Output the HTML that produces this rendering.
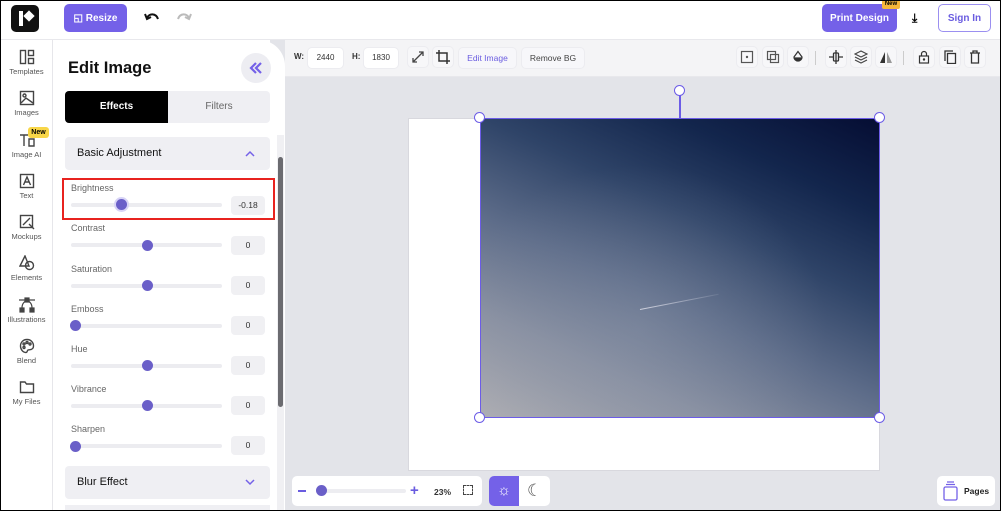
<!DOCTYPE html>
<html><head><meta charset="utf-8"><style>
*{box-sizing:border-box;margin:0;padding:0}
body{width:1001px;height:511px;overflow:hidden;font-family:"Liberation Sans",sans-serif;background:#fff;position:relative}
.a{position:absolute}
.fc{display:flex;align-items:center;justify-content:center}
.frame{left:0;top:0;width:1001px;height:511px;border:1px solid #000;z-index:50;pointer-events:none}
.rail{left:0;top:40px;width:53px;height:471px;background:#fff;border-right:1px solid #e6e6ea}
.ri{position:absolute;left:0;width:53px;text-align:center;font-size:7.5px;color:#555}
.ri svg{display:block;margin:0 auto 2px}
.lbl{position:absolute;left:71px;font-size:9px;color:#666}
.trk{position:absolute;left:71px;width:151px;height:4px;border-radius:2px;background:#ececf0}
.th{position:absolute;width:11px;height:11px;border-radius:50%;background:#6a5fc8}
.val{position:absolute;left:231px;width:34px;height:19px;border-radius:4px;background:#f0f0f3;font-size:8.5px;color:#333;text-align:center;line-height:19px}
.tb{position:absolute;top:48px;height:20px;border-radius:4px;background:#fff;box-shadow:0 0 0 1px #ececf0}
.ib{position:absolute;top:47px;width:20px;height:20px;border-radius:4px;background:#f7f7f9;box-shadow:0 0 0 1px #ececf0}
.ib svg{position:absolute;left:3px;top:3px}
.hd{position:absolute;width:11px;height:11px;border-radius:50%;background:#fff;border:1.5px solid #6c5ce7}
</style></head><body>
<div class="a frame"></div>
<div class="a" style="left:0;top:0;width:1001px;height:40px;background:#fff;border-bottom:1px solid #e8e8ec"></div>
<div class="a" style="left:11px;top:5px;width:28px;height:27px;border-radius:5px;background:#111"></div>
<div class="a" style="left:19px;top:11px;width:4px;height:15px;background:#fff"></div>
<div class="a" style="left:25px;top:12px;width:8px;height:8px;background:#fff;transform:rotate(45deg)"></div>
<div class="a fc" style="left:64px;top:4px;width:63px;height:28px;border-radius:5px;background:#7461e8;color:#fff;font-size:10px;font-weight:bold">◱&nbsp;Resize</div>
<svg class="a" style="left:144px;top:11px" width="16" height="14" viewBox="0 0 16 14"><path d="M3 7 C5 2 12 2 14 8" fill="none" stroke="#111" stroke-width="2"/><path d="M1 3 L3 8 L7 6" fill="none" stroke="#111" stroke-width="2"/></svg>
<svg class="a" style="left:176px;top:11px" width="16" height="14" viewBox="0 0 16 14"><path d="M13 7 C11 2 4 2 2 8" fill="none" stroke="#bbb" stroke-width="2"/><path d="M15 3 L13 8 L9 6" fill="none" stroke="#bbb" stroke-width="2"/></svg>
<div class="a fc" style="left:822px;top:4px;width:75px;height:28px;border-radius:5px;background:#7461e8;color:#fff;font-size:10px;font-weight:bold">Print Design</div>
<div class="a" style="left:882px;top:0;width:18px;height:9px;background:#f5b73a;font-size:6px;font-weight:bold;text-align:center;line-height:9px;border-radius:2px">New</div>
<div class="a" style="left:912px;top:11px;font-size:12px;font-weight:bold">⤓</div>
<div class="a fc" style="left:938px;top:4px;width:53px;height:28px;border-radius:5px;border:1.5px solid #9b8ff0;color:#6a5ce0;font-size:10px;font-weight:bold">Sign In</div>
<div class="a rail"></div>
<div class="ri" style="top:49px"><svg width="16" height="16" viewBox="0 0 16 16" fill="none" stroke="#444" stroke-width="1.4"><rect x="1.5" y="1.5" width="5" height="13"/><rect x="9.5" y="1.5" width="5" height="5"/><rect x="9.5" y="9.5" width="5" height="5"/></svg>Templates</div>
<div class="ri" style="top:90px"><svg width="16" height="16" viewBox="0 0 16 16" fill="none" stroke="#444" stroke-width="1.4"><rect x="1.5" y="1.5" width="13" height="13"/><circle cx="5.5" cy="5.5" r="1.5"/><path d="M2 13 L7 8 L14 13"/></svg>Images</div>
<div class="ri" style="top:132px"><svg width="16" height="16" viewBox="0 0 16 16" fill="none" stroke="#444" stroke-width="1.4"><path d="M1 3H9M5 3V14M10 7H15V14H10Z"/></svg>Image AI</div>
<div class="a" style="left:28px;top:127px;width:21px;height:11px;border-radius:3px;background:#f8d648;font-size:7px;font-weight:bold;text-align:center;line-height:11px">New</div>
<div class="ri" style="top:173px"><svg width="16" height="16" viewBox="0 0 16 16" fill="none" stroke="#444" stroke-width="1.4"><rect x="1.5" y="1.5" width="13" height="13"/><path d="M4.5 12L8 4L11.5 12M6 9H10"/></svg>Text</div>
<div class="ri" style="top:214px"><svg width="16" height="16" viewBox="0 0 16 16" fill="none" stroke="#444" stroke-width="1.4"><rect x="1.5" y="1.5" width="12" height="12"/><path d="M4 11L11 4M10 10L15 15"/></svg>Mockups</div>
<div class="ri" style="top:255px"><svg width="16" height="16" viewBox="0 0 16 16" fill="none" stroke="#444" stroke-width="1.4"><path d="M6 1L1 11H10Z"/><circle cx="10.5" cy="10.5" r="4"/></svg>Elements</div>
<div class="ri" style="top:297px"><svg width="16" height="16" viewBox="0 0 16 16" fill="#444" stroke="#444" stroke-width="1.2"><rect x="6" y="1" width="4" height="4"/><rect x="1" y="11" width="4" height="4"/><rect x="11" y="11" width="4" height="4"/><path d="M0 3H16M3 11C3 6 6 4 8 4C10 4 13 6 13 11" fill="none"/></svg>Illustrations</div>
<div class="ri" style="top:338px"><svg width="16" height="16" viewBox="0 0 16 16" fill="none" stroke="#444" stroke-width="1.4"><path d="M8 1.5C4 1.5 1.5 4.5 1.5 8C1.5 11.5 4 14.5 7 14.5C8.5 14.5 8 12.5 9 12C10 11.5 14.5 12.5 14.5 8C14.5 4.5 12 1.5 8 1.5Z"/><circle cx="5" cy="6" r="1"/><circle cx="8" cy="4.5" r="1"/><circle cx="11" cy="6" r="1"/><circle cx="5" cy="9.5" r="1"/></svg>Blend</div>
<div class="ri" style="top:379px"><svg width="16" height="16" viewBox="0 0 16 16" fill="none" stroke="#444" stroke-width="1.4"><path d="M1.5 3H6L7.5 5H14.5V13.5H1.5Z"/></svg>My Files</div>
<div class="a" style="left:270px;top:40px;width:731px;height:471px;background:#e3e4e9"></div>
<div class="a" style="left:285px;top:40px;width:716px;height:37px;background:#f4f4f6;border-bottom:1px solid #e8e8ec"></div>
<div class="a" style="left:54px;top:40px;width:231px;height:471px;background:#fff;border-top-right-radius:26px"></div>
<div class="a" style="left:68px;top:59px;font-size:16.5px;font-weight:bold;color:#111">Edit Image</div>
<div class="a" style="left:241px;top:53px;width:30px;height:30px;border-radius:50%;background:#ededf2"></div>
<svg class="a" style="left:249px;top:61px" width="14" height="14" viewBox="0 0 14 14" fill="none" stroke="#7461e8" stroke-width="2.2"><path d="M7 2L2 7L7 12M12 2L7 7L12 12"/></svg>
<div class="a" style="left:65px;top:91px;width:205px;height:32px;border-radius:4px;background:#efeff3"></div>
<div class="a" style="left:65px;top:91px;width:103px;height:32px;border-radius:4px 0 0 4px;background:#000;color:#fff;font-size:10px;font-weight:bold;text-align:center;line-height:32px">Effects</div>
<div class="a" style="left:168px;top:91px;width:102px;height:32px;color:#666;font-size:10px;text-align:center;line-height:32px">Filters</div>
<div class="a" style="left:65px;top:137px;width:205px;height:33px;border-radius:4px;background:#efeff3;font-size:11px;color:#111;line-height:33px;padding-left:12px">Basic Adjustment</div>
<svg class="a" style="left:245px;top:150px" width="10" height="7" viewBox="0 0 10 7" fill="none" stroke="#7461e8" stroke-width="1.5"><path d="M1 6L5 2L9 6"/></svg>
<div class="a" style="left:277px;top:135px;width:7px;height:376px;background:#f0f0f3"></div>
<div class="a" style="left:278px;top:157px;width:5px;height:250px;border-radius:3px;background:#6b6b70"></div>
<div class="a" style="left:62px;top:178px;width:213px;height:42px;border:2px solid #e8231f"></div>
<div class="lbl" style="top:183px">Brightness</div><div class="trk" style="top:203px"></div><div class="th" style="left:116px;top:199px;box-shadow:0 0 0 2px #d8d4f6"></div><div class="val" style="top:196px">-0.18</div>
<div class="lbl" style="top:223px">Contrast</div><div class="trk" style="top:243px"></div><div class="th" style="left:142px;top:240px"></div><div class="val" style="top:236px">0</div>
<div class="lbl" style="top:264px">Saturation</div><div class="trk" style="top:284px"></div><div class="th" style="left:142px;top:280px"></div><div class="val" style="top:276px">0</div>
<div class="lbl" style="top:304px">Emboss</div><div class="trk" style="top:324px"></div><div class="th" style="left:70px;top:320px"></div><div class="val" style="top:316px">0</div>
<div class="lbl" style="top:344px">Hue</div><div class="trk" style="top:364px"></div><div class="th" style="left:142px;top:360px"></div><div class="val" style="top:356px">0</div>
<div class="lbl" style="top:384px">Vibrance</div><div class="trk" style="top:404px"></div><div class="th" style="left:142px;top:400px"></div><div class="val" style="top:396px">0</div>
<div class="lbl" style="top:424px">Sharpen</div><div class="trk" style="top:444px"></div><div class="th" style="left:70px;top:441px"></div><div class="val" style="top:436px">0</div>
<div class="a" style="left:65px;top:466px;width:205px;height:33px;border-radius:4px;background:#efeff3;font-size:11px;color:#111;line-height:33px;padding-left:12px">Blur Effect</div>
<svg class="a" style="left:245px;top:479px" width="10" height="7" viewBox="0 0 10 7" fill="none" stroke="#7461e8" stroke-width="1.5"><path d="M1 1L5 5L9 1"/></svg>
<div class="a" style="left:65px;top:505px;width:205px;height:6px;background:#efeff3"></div>
<div class="a" style="left:294px;top:52px;font-size:8px;font-weight:bold;color:#333">W:</div>
<div class="tb" style="left:308px;width:35px;font-size:8px;text-align:center;line-height:20px;color:#333">2440</div>
<div class="a" style="left:352px;top:52px;font-size:8px;font-weight:bold;color:#333">H:</div>
<div class="tb" style="left:364px;width:34px;font-size:8px;text-align:center;line-height:20px;color:#333">1830</div>
<div class="ib" style="left:408px"><svg width="14" height="14" viewBox="0 0 14 14" fill="none" stroke="#444" stroke-width="1.3"><path d="M2 12L12 2M8 2H12V6M2 8V12H6"/></svg></div>
<div class="ib" style="left:433px"><svg width="14" height="14" viewBox="0 0 14 14" fill="none" stroke="#333" stroke-width="1.5"><path d="M3 0V11H14M0 3H11V14"/></svg></div>
<div class="tb" style="left:459px;width:57px;font-size:8.5px;color:#6a5ce0;text-align:center;line-height:20px;background:#f7f7fa">Edit Image</div>
<div class="tb" style="left:522px;width:62px;font-size:8.5px;color:#444;text-align:center;line-height:20px;background:#f7f7fa">Remove BG</div>
<div class="ib" style="left:737px"><svg width="14" height="14" viewBox="0 0 14 14" fill="none" stroke="#555" stroke-width="1.2"><rect x="1.5" y="1.5" width="11" height="11"/><circle cx="7" cy="7" r=".6" fill="#555"/></svg></div>
<div class="ib" style="left:763px"><svg width="14" height="14" viewBox="0 0 14 14" fill="none" stroke="#555" stroke-width="1.2"><rect x="1.5" y="1.5" width="8" height="8"/><rect x="4.5" y="4.5" width="8" height="8"/></svg></div>
<div class="ib" style="left:788px"><svg width="14" height="14" viewBox="0 0 14 14" fill="none" stroke="#333" stroke-width="1.2"><path d="M7 1.5L3 7A4 4 0 0 0 11 7Z"/><path d="M3.2 8H10.8A4 4 0 0 1 3.2 8Z" fill="#333"/></svg></div>
<div class="a" style="left:815px;top:51px;width:1px;height:14px;background:#ccc"></div>
<div class="ib" style="left:826px"><svg width="14" height="14" viewBox="0 0 14 14" fill="none" stroke="#333" stroke-width="1.3"><path d="M0 7H4M10 7H14M7 0V14"/><rect x="4.5" y="3" width="5" height="8" rx="1"/></svg></div>
<div class="ib" style="left:851px"><svg width="14" height="14" viewBox="0 0 14 14" fill="none" stroke="#444" stroke-width="1.2"><path d="M7 1L13 4L7 7L1 4Z M1 7L7 10L13 7 M1 10L7 13L13 10"/></svg></div>
<div class="ib" style="left:876px"><svg width="14" height="14" viewBox="0 0 14 14"><path d="M6 2V13H1Z" fill="#333"/><path d="M8 2V13H13Z" fill="#999"/></svg></div>
<div class="a" style="left:903px;top:51px;width:1px;height:14px;background:#ccc"></div>
<div class="ib" style="left:914px"><svg width="14" height="14" viewBox="0 0 14 14" fill="none" stroke="#333" stroke-width="1.2"><rect x="2.5" y="6" width="9" height="7"/><path d="M4.5 6V4A2.5 2.5 0 0 1 9.5 4V6"/><circle cx="7" cy="9.5" r=".6" fill="#333"/></svg></div>
<div class="ib" style="left:940px"><svg width="14" height="14" viewBox="0 0 14 14" fill="none" stroke="#333" stroke-width="1.3"><rect x="4.5" y="3.5" width="8" height="10"/><path d="M2 11V1H10"/></svg></div>
<div class="ib" style="left:965px"><svg width="14" height="14" viewBox="0 0 14 14" fill="none" stroke="#333" stroke-width="1.3"><path d="M2 3H12M5 3V1H9V3M3.5 3V13H10.5V3"/></svg></div>
<div class="a" style="left:408px;top:118px;width:472px;height:353px;background:#fff;border:1px solid #d8d8de"></div>
<div class="a" style="left:480px;top:118px;width:400px;height:300px;background:linear-gradient(25deg,#aeaeb3 0%,#8a91a2 22%,#5d6c89 42%,#2f4468 62%,#13264d 80%,#050d33 100%)"></div>
<div class="a" style="left:480px;top:118px;width:400px;height:300px;background:radial-gradient(ellipse at 40% 70%,rgba(140,150,170,.35),rgba(0,0,0,0) 55%)"></div>
<div class="a" style="left:640px;top:309px;width:80px;height:1px;background:linear-gradient(90deg,rgba(230,230,240,.8),rgba(230,230,240,.1));transform:rotate(-11deg);transform-origin:left"></div>
<div class="a" style="left:480px;top:118px;width:400px;height:300px;border:1.5px solid #6c5ce7"></div>
<div class="a" style="left:679px;top:93px;width:1.5px;height:25px;background:#6c5ce7"></div>
<div class="hd" style="left:674px;top:85px"></div>
<div class="hd" style="left:474px;top:112px"></div>
<div class="hd" style="left:874px;top:112px"></div>
<div class="hd" style="left:474px;top:412px"></div>
<div class="hd" style="left:874px;top:412px"></div>
<div class="a" style="left:292px;top:476px;width:190px;height:30px;border-radius:5px;background:#fff"></div>
<div class="a" style="left:298px;top:490px;width:8px;height:2px;background:#6a5ce0"></div>
<div class="a" style="left:316px;top:489px;width:90px;height:4px;border-radius:2px;background:#ededf1"></div>
<div class="th" style="left:316px;top:485px"></div>
<div class="a" style="left:410px;top:482px;font-size:15px;color:#6a5ce0;font-weight:bold">+</div>
<div class="a" style="left:434px;top:487px;font-size:8.5px;font-weight:bold;color:#333">23%</div>
<div class="a" style="left:463px;top:485px;width:10px;height:10px;border:1.3px dashed #444"></div>
<div class="a" style="left:489px;top:476px;width:61px;height:30px;border-radius:5px;background:#fff"></div>
<div class="a" style="left:489px;top:476px;width:30px;height:30px;border-radius:5px 0 0 5px;background:#7461e8;color:#fff;font-size:15px;text-align:center;line-height:30px">☼</div>
<div class="a" style="left:527px;top:481px;font-size:17px;color:#555">☾</div>
<div class="a" style="left:937px;top:476px;width:58px;height:30px;border-radius:5px;background:#fff"></div>
<svg class="a" style="left:943px;top:481px" width="15" height="20" viewBox="0 0 15 20" fill="none" stroke="#7461e8" stroke-width="1.3"><rect x="1" y="6" width="13" height="13" rx="1.5"/><path d="M3 3.5H12M4 1H11"/></svg>
<div class="a" style="left:964px;top:486px;font-size:8.5px;font-weight:bold;color:#222">Pages</div>
</body></html>
